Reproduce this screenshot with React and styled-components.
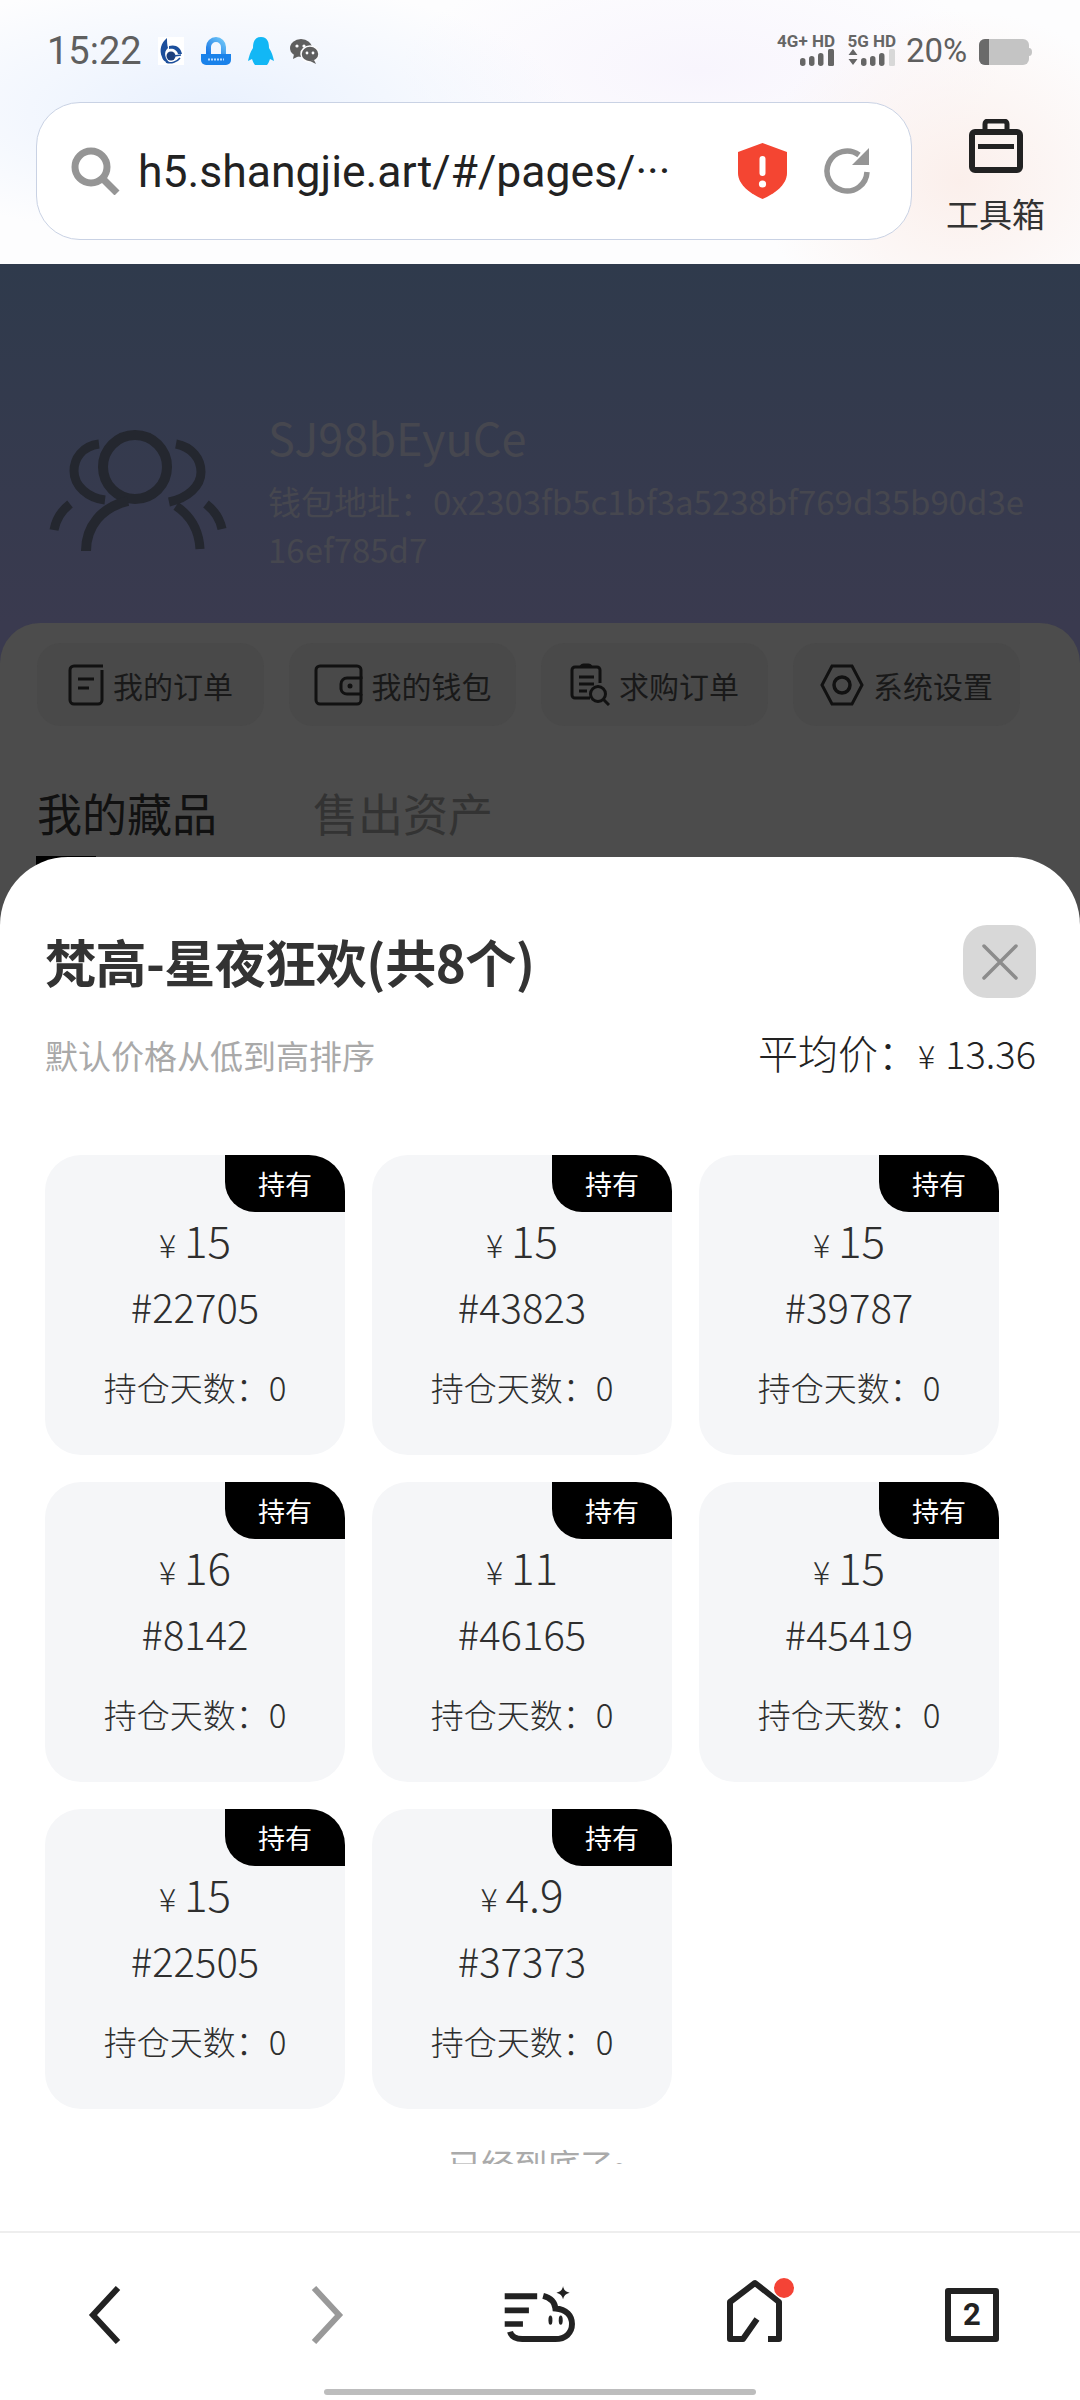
import React from 'react';
import styled, { createGlobalStyle } from 'styled-components';

const GlobalStyle = createGlobalStyle`
  html, body {
    margin: 0;
    padding: 0;
    background: #fff;
  }
  * {
    box-sizing: border-box;
  }
`;

const cjk = `"Noto Sans CJK SC", "Noto Sans", sans-serif`;

const Screen = styled.div`
  position: relative;
  width: 1080px;
  height: 2400px;
  overflow: hidden;
  display: flex;
  flex-direction: column;
  font-family: ${cjk};
`;

const Chrome = styled.header`
  height: 264px;
  flex: none;
  background:
    radial-gradient(ellipse 360px 130px at 210px 110px, #e9f1fe 0%, rgba(233, 241, 254, 0) 100%),
    radial-gradient(ellipse 200px 170px at 960px 180px, #fbefeb 0%, rgba(251, 239, 235, 0) 100%),
    radial-gradient(ellipse 300px 120px at 700px 70px, #f8f5fd 0%, rgba(248, 245, 253, 0) 100%),
    #fdfdfe;
`;

const StatusBar = styled.div`
  height: 102px;
  padding: 31px 48px 0 47px;
  display: flex;
  align-items: flex-start;
  color: #5f5f5f;
`;

const Time = styled.span`
  font-family: Roboto, sans-serif;
  font-size: 38px;
  line-height: 40px;
  width: 111px;
`;

const AppIcons = styled.div`
  display: flex;
  gap: 16px;
  align-items: center;
  height: 40px;
`;

const StatusRight = styled.div`
  margin-left: auto;
  display: flex;
  align-items: flex-start;
`;

const SignalBlock = styled.div`
  display: flex;
  flex-direction: column;
  align-items: flex-end;
  width: ${(p) => p.$w}px;
  margin-right: ${(p) => p.$mr}px;
`;

const SignalLabel = styled.span`
  font-family: Roboto, sans-serif;
  font-size: 17px;
  line-height: 16px;
  font-weight: 700;
  white-space: nowrap;
  color: #666;
  margin-top: 2px;
`;

const Percent = styled.span`
  font-family: Roboto, sans-serif;
  font-size: 33px;
  line-height: 40px;
  width: 73px;
`;

const BatterySvg = styled.svg`
  margin-top: 8px;
`;

const AddressRow = styled.div`
  padding-left: 36px;
  display: flex;
`;

const UrlBox = styled.div`
  width: 876px;
  height: 138px;
  border: 1.5px solid #c9d2e4;
  border-radius: 44px;
  background: #fff;
  padding-left: 34px;
  display: flex;
  align-items: center;
`;

const UrlText = styled.span`
  font-family: Roboto, sans-serif;
  font-size: 44.5px;
  color: #222;
  margin: 2px 0 0 18px;
  width: 600px;
  white-space: nowrap;
`;

const ReloadSvg = styled.svg`
  margin-left: 36px;
`;

const ToolBox = styled.div`
  margin-left: 34px;
  width: 99px;
  display: flex;
  flex-direction: column;
  align-items: center;
  padding-top: 17px;
  gap: 18px;
`;

const ToolLabel = styled.span`
  font-size: 33px;
  line-height: 44px;
  color: #333;
`;

const Backdrop = styled.section`
  flex: 1;
  min-height: 0;
  background: linear-gradient(180deg, #2f3a4c 0, #3a3a4f 359px, #3a3a4f 100%);
  display: flex;
  flex-direction: column;
`;

const Profile = styled.div`
  height: 359px;
  flex: none;
  padding: 144px 0 0 30px;
  display: flex;
  gap: 18px;
`;

const AvatarSvg = styled.svg`
  flex: none;
  margin-top: 3px;
`;

const ProfileText = styled.div`
  width: 760px;
  color: #46474f;
`;

const UserName = styled.div`
  font-size: 45px;
  line-height: 58px;
  margin-bottom: 11px;
`;

const WalletAddr = styled.div`
  font-size: 33px;
  line-height: 48px;
  word-break: break-all;
`;

const Sheet = styled.div`
  flex: 1;
  background: #4c4c4c;
  border-radius: 40px 40px 0 0;
  padding: 20px 37px 0;
`;

const MenuRow = styled.div`
  display: flex;
  gap: 25px;
`;

const MenuBtn = styled.div`
  width: 227px;
  height: 83px;
  background: #494949;
  border-radius: 24px;
  display: flex;
  align-items: center;
  justify-content: center;
  gap: 9px;
  font-size: 30px;
  color: #191919;
`;

const Tabs = styled.div`
  display: flex;
  gap: 96px;
  margin-top: 57px;
`;

const Tab = styled.span`
  font-size: 45px;
  line-height: 60px;
  color: ${(p) => (p.$active ? '#111' : '#333')};
`;

const TabLine = styled.div`
  margin: 13px 0 0 -1px;
  width: 60px;
  height: 12px;
  background: #000;
`;

const Modal = styled.div`
  position: absolute;
  left: 0;
  right: 0;
  top: 857px;
  bottom: 0;
  background: #fff;
  border-radius: 68px 68px 0 0;
  display: flex;
  flex-direction: column;
`;

const ModalHead = styled.div`
  padding: 68px 44px 0 45px;
  flex: none;
`;

const TitleRow = styled.div`
  display: flex;
  align-items: center;
  justify-content: space-between;
  height: 73px;
`;

const Title = styled.h2`
  margin: 0;
  font-size: 51px;
  line-height: 73px;
  font-weight: 700;
  letter-spacing: -0.5px;
  color: #333;
`;

const CloseBtn = styled.div`
  width: 73px;
  height: 73px;
  border-radius: 24px;
  background: #d8d8d8;
  display: flex;
  align-items: center;
  justify-content: center;
`;

const SubRow = styled.div`
  display: flex;
  align-items: center;
  justify-content: space-between;
  height: 50px;
  margin-top: 32px;
`;

const SortHint = styled.span`
  font-size: 33px;
  color: #a9a9a9;
`;

const Average = styled.span`
  font-size: 40px;
  font-weight: 300;
  line-height: 50px;
  margin-top: -4px;
  color: #222;
  display: flex;
  align-items: baseline;
`;

const AverageYen = styled.span`
  font-size: 32px;
`;

const AverageNum = styled.span`
  font-size: 38px;
  margin-left: 10px;
`;

const ListArea = styled.div`
  height: 1084px;
  padding: 75px 0 0 45px;
  overflow: hidden;
  flex: none;
`;

const Grid = styled.div`
  display: grid;
  grid-template-columns: repeat(3, 300px);
  gap: 27px;
`;

const Card = styled.div`
  position: relative;
  height: 300px;
  padding-top: 56px;
  border-radius: 36px;
  background: #f5f6f8;
  display: flex;
  flex-direction: column;
  align-items: center;
  font-weight: 300;
  color: #2e2e2e;
`;

const Badge = styled.span`
  position: absolute;
  top: 0;
  right: 0;
  width: 120px;
  height: 57px;
  background: #000;
  color: #fff;
  border-radius: 0 36px 0 30px;
  font-size: 27px;
  font-weight: 400;
  line-height: 57px;
  text-align: center;
`;

const Price = styled.div`
  line-height: 56px;
  font-size: 44px;
  display: flex;
  align-items: baseline;
  gap: 8px;
`;

const Yen = styled.span`
  font-size: 32px;
`;

const Serial = styled.div`
  font-size: 40px;
  line-height: 48px;
  margin-top: 10px;
`;

const Days = styled.div`
  font-size: 33px;
  line-height: 44px;
  margin-top: 35px;
`;

const EndHint = styled.div`
  margin: 35px 0 0 -45px;
  text-align: center;
  font-size: 33px;
  line-height: 40px;
  color: #aaa;
`;

const BottomBar = styled.nav`
  margin-top: auto;
  height: 169px;
  flex: none;
  border-top: 2px solid #eeeeee;
  display: flex;
  flex-direction: column;
  align-items: center;
`;

const NavRow = styled.div`
  width: 100%;
  height: 156px;
  padding-top: 8px;
  display: grid;
  grid-template-columns: repeat(5, 216px);
  align-items: center;
  justify-items: center;
`;

const ChevronSvg = styled.svg`
  margin-left: ${(p) => p.$shift}px;
`;

const HomeSvg = styled.svg`
  margin: -8px 0 0 7px;
`;

const TabCount = styled.div`
  width: 54px;
  height: 54px;
  border: 6px solid #222;
  border-radius: 3px;
  font-family: Roboto, sans-serif;
  font-size: 31px;
  font-weight: 700;
  line-height: 42px;
  text-align: center;
  color: #222;
`;

const HomeBar = styled.div`
  width: 432px;
  height: 6px;
  border-radius: 3px;
  background: #bdbdbd;
`;

const BlueLogo = () => (
  <svg width="26" height="28" viewBox="0 0 26 28">
    <rect width="26" height="28" fill="#fff" />
    <path d="M9 1 C3 6 1 13 4 20 C5 24 9 26 12 26 C7 22 5 15 10 11 C9 8 9 4 9 1Z" fill="#1c4f9c" />
    <path d="M11 9 C17 7 23 10 24 17 L20 17 C19 13 15 11 11 12Z" fill="#1c4f9c" />
    <circle cx="13" cy="19" r="4.5" fill="#1c3f7c" />
    <path d="M16 19 L23 18 M8 25 C13 27 19 25 22 21" stroke="#1c4f9c" strokeWidth="1.5" fill="none" />
  </svg>
);

const LockApp = () => (
  <svg width="32" height="29" viewBox="0 0 32 29">
    <defs>
      <linearGradient id="lockArc" x1="0" x2="1" y1="1" y2="0">
        <stop offset="0" stopColor="#1a78e6" />
        <stop offset="1" stopColor="#6cc4f7" />
      </linearGradient>
    </defs>
    <path d="M8.5 17 V10 A7.5 7.5 0 0 1 23.5 10 V17" fill="none" stroke="url(#lockArc)" strokeWidth="5" />
    <path d="M1 17 H31 V23 A5 5 0 0 1 26 28 H6 A5 5 0 0 1 1 23Z" fill="#1a82ea" />
    <path d="M8 22.5 H24" stroke="#b9dcff" strokeWidth="2" strokeDasharray="2 1" />
  </svg>
);

const Penguin = () => (
  <svg width="26" height="29" viewBox="0 0 26 29">
    <path d="M13 0 C6 0 5 6 5 11 C2 15 1 20 0 24 L4 22 C5 25 6 27 7 28 L19 28 C20 27 21 25 22 22 L26 24 C25 20 24 15 21 11 C21 6 20 0 13 0Z" fill="#12b7f5" />
  </svg>
);

const Wechat = () => (
  <svg width="29" height="25" viewBox="0 0 29 25">
    <ellipse cx="11" cy="9" rx="11" ry="9" fill="#5f5f5f" />
    <path d="M4 15 L3 20 L9 17Z" fill="#5f5f5f" />
    <ellipse cx="20" cy="15" rx="9" ry="8" fill="#5f5f5f" stroke="#fdfdfe" strokeWidth="1.5" />
    <path d="M24 21 L26 25 L20 22Z" fill="#5f5f5f" />
    <circle cx="7" cy="7" r="1.6" fill="#fdfdfe" />
    <circle cx="14" cy="7" r="1.6" fill="#fdfdfe" />
    <circle cx="17" cy="14" r="1.4" fill="#fdfdfe" />
    <circle cx="23" cy="14" r="1.4" fill="#fdfdfe" />
  </svg>
);

const Bars = ({ arrows, faded }) => (
  <svg width={arrows ? 48 : 36} height="17" viewBox={arrows ? '0 0 48 17' : '12 0 36 17'}>
    {arrows && <path d="M5 0 L9.5 6 H0.5Z M5 16 L9.5 10 H0.5Z" fill="#666" />}
    <rect x="13" y="9" width="5.5" height="8" rx="2.7" fill="#666" />
    <rect x="22" y="7" width="5.5" height="10" rx="2.7" fill="#666" />
    <rect x="31" y="4" width="5.5" height="13" rx="2.7" fill="#666" />
    <rect x="41" y="0" width="6" height="17" rx="1.5" fill={faded ? '#d8d8d8' : '#666'} />
  </svg>
);

const Battery = () => (
  <BatterySvg width="53" height="26" viewBox="0 0 53 26">
    <rect width="50" height="26" rx="6" fill="#c4c4c4" />
    <path d="M6 0 H10 V26 H6 A6 6 0 0 1 0 20 V6 A6 6 0 0 1 6 0Z" fill="#6a6a6a" />
    <path d="M50 9 A3 4 0 0 1 50 17Z" fill="#c4c4c4" />
  </BatterySvg>
);

const SearchIcon = () => (
  <svg width="49" height="48" viewBox="0 0 49 48">
    <circle cx="20" cy="20" r="16" fill="none" stroke="#959595" strokeWidth="7" />
    <path d="M31 31 L46 46" stroke="#959595" strokeWidth="7" />
  </svg>
);

const ShieldIcon = () => (
  <svg width="49" height="56" viewBox="0 0 49 56">
    <path d="M24.5 0 L49 9 V30 C49 42 36 51 24.5 56 C13 51 0 42 0 30 V9Z" fill="#f44532" />
    <rect x="21.5" y="13" width="6" height="20" rx="3" fill="#fff" />
    <circle cx="24.5" cy="41" r="3.6" fill="#fff" />
  </svg>
);

const ReloadIcon = () => (
  <ReloadSvg width="48" height="48" viewBox="0 0 48 48">
    <path d="M44 25 A20 20 0 1 1 36 8" fill="none" stroke="#959595" strokeWidth="5.5" />
    <path d="M46 1 V18 H29Z" fill="#959595" />
  </ReloadSvg>
);

const ToolboxIcon = () => (
  <svg width="54" height="54" viewBox="0 0 54 54">
    <path d="M16 13 V5 A3 3 0 0 1 19 2 H35 A3 3 0 0 1 38 5 V13" fill="none" stroke="#222" strokeWidth="5" />
    <rect x="3" y="13" width="48" height="38" rx="3" fill="none" stroke="#222" strokeWidth="6" />
    <rect x="9" y="25" width="36" height="5" fill="#222" />
  </svg>
);

const Avatar = () => (
  <AvatarSvg width="220" height="160" viewBox="0 0 220 160">
    <g fill="none" stroke="#24272f">
      <circle cx="105" cy="56" r="32" strokeWidth="10" />
      <path d="M56 140 C56 115 72 96 98 90" strokeWidth="10" />
      <path d="M170 138 C169 120 161 105 146 95" strokeWidth="9" />
      <path d="M69 33 C52 35 44 48 44 60 C44 75 58 87 75 89" strokeWidth="9" />
      <path d="M146 33 C162 36 171 48 171 61 C171 75 158 87 139 91" strokeWidth="9" />
      <path d="M40 93 C31 100 26 108 24 119" strokeWidth="9" />
      <path d="M176 93 C185 100 190 108 192 118" strokeWidth="9" />
    </g>
  </AvatarSvg>
);

const OrderIcon = () => (
  <svg width="36" height="42" viewBox="0 0 36 42" fill="none" stroke="#111" strokeWidth="3">
    <path d="M35 2 H6 A4 4 0 0 0 2 6 V36 A4 4 0 0 0 6 40 H30 A4 4 0 0 0 34 36 V6" />
    <path d="M10 15 H26 M10 24 H21" />
  </svg>
);

const WalletIcon = () => (
  <svg width="49" height="42" viewBox="0 0 49 42" fill="none" stroke="#111" strokeWidth="3">
    <path d="M47 15 V6 A4 4 0 0 0 43 2 H6 A4 4 0 0 0 2 6 V36 A4 4 0 0 0 6 40 H43 A4 4 0 0 0 47 36 V30" />
    <path d="M47 14 H33 A6 6 0 0 0 27 20 V25 A6 6 0 0 0 33 30 H47Z" />
    <circle cx="36" cy="22" r="2.5" fill="#111" stroke="none" />
  </svg>
);

const ClipboardIcon = () => (
  <svg width="40" height="43" viewBox="0 0 40 43" fill="none" stroke="#111" strokeWidth="3">
    <path d="M20 35 H5 A3 3 0 0 1 2 32 V7 A3 3 0 0 1 5 4 H27 A3 3 0 0 1 30 7 V20" />
    <path d="M11 4 A3 3 0 0 1 14 2 H18 A3 3 0 0 1 21 4" />
    <path d="M9 14 H24 M9 21 H24 M9 28 H17" />
    <circle cx="28" cy="31" r="7.5" />
    <path d="M33 36 L39 42" />
  </svg>
);

const HexIcon = () => (
  <svg width="44" height="42" viewBox="0 0 44 42" fill="none" stroke="#111" strokeWidth="3">
    <path d="M12 2 H32 L42 21 L32 40 H12 L2 21Z" />
    <circle cx="22" cy="21" r="8" strokeWidth="3.5" />
  </svg>
);

const CloseIcon = () => (
  <svg width="36" height="36" viewBox="0 0 36 36">
    <path d="M2 2 L34 34 M34 2 L2 34" stroke="#8c8c8c" strokeWidth="3.5" strokeLinecap="round" />
  </svg>
);

const Chevron = ({ color, dir }) => (
  <ChevronSvg $shift={dir === 'left' ? -6 : 6} width="36" height="58" viewBox="0 0 36 58">
    <path
      d={dir === 'left' ? 'M31 2 L6 29 L31 56' : 'M5 2 L30 29 L5 56'}
      fill="none"
      stroke={color}
      strokeWidth="6"
    />
  </ChevronSvg>
);

const HubIcon = () => (
  <svg width="73" height="58" viewBox="190 80 220 175">
    <path d="M192 102 H290 V120 H192Z M192 145 H265 V162 H192Z M192 186 H247 V203 H192Z" fill="#222" />
    <path
      d="M308 110 C330 116 343 128 345 148 C378 150 395 170 395 195 C395 222 375 240 345 240 H245 C225 240 212 232 208 218"
      fill="none"
      stroke="#222"
      strokeWidth="18"
    />
    <ellipse cx="330" cy="183" rx="6" ry="14" fill="#222" />
    <ellipse cx="361" cy="183" rx="6" ry="14" fill="#222" />
    <path d="M368 80 C370 92 376 98 388 100 C376 103 370 109 368 120 C366 109 360 103 348 100 C360 98 366 92 368 80Z" fill="#222" />
  </svg>
);

const HomeIcon = () => (
  <HomeSvg width="72" height="68" viewBox="0 0 72 68">
    <path
      d="M33 42 L19 62 H6 V25 L31 6 L55 25 V62 H44"
      fill="none"
      stroke="#222"
      strokeWidth="6"
      strokeLinejoin="round"
    />
    <circle cx="60" cy="11" r="10" fill="#f44336" />
  </HomeSvg>
);

const menus = [
  { label: '我的订单', icon: <OrderIcon /> },
  { label: '我的钱包', icon: <WalletIcon /> },
  { label: '求购订单', icon: <ClipboardIcon /> },
  { label: '系统设置', icon: <HexIcon /> },
];

const items = [
  { price: '15', no: '22705' },
  { price: '15', no: '43823' },
  { price: '15', no: '39787' },
  { price: '16', no: '8142' },
  { price: '11', no: '46165' },
  { price: '15', no: '45419' },
  { price: '15', no: '22505' },
  { price: '4.9', no: '37373' },
];

const App = () => (
  <Screen>
    <GlobalStyle />
    <Chrome>
      <StatusBar>
        <Time>15:22</Time>
        <AppIcons>
          <BlueLogo />
          <LockApp />
          <Penguin />
          <Wechat />
        </AppIcons>
        <StatusRight>
          <SignalBlock $w={58} $mr={11}>
            <SignalLabel>4G+ HD</SignalLabel>
            <Bars />
          </SignalBlock>
          <SignalBlock $w={50} $mr={10}>
            <SignalLabel>5G HD</SignalLabel>
            <Bars arrows faded />
          </SignalBlock>
          <Percent>20%</Percent>
          <Battery />
        </StatusRight>
      </StatusBar>
      <AddressRow>
        <UrlBox>
          <SearchIcon />
          <UrlText>h5.shangjie.art/#/pages/···</UrlText>
          <ShieldIcon />
          <ReloadIcon />
        </UrlBox>
        <ToolBox>
          <ToolboxIcon />
          <ToolLabel>工具箱</ToolLabel>
        </ToolBox>
      </AddressRow>
    </Chrome>

    <Backdrop>
      <Profile>
        <Avatar />
        <ProfileText>
          <UserName>SJ98bEyuCe</UserName>
          <WalletAddr>钱包地址：0x2303fb5c1bf3a5238bf769d35b90d3e16ef785d7</WalletAddr>
        </ProfileText>
      </Profile>
      <Sheet>
        <MenuRow>
          {menus.map((m) => (
            <MenuBtn key={m.label}>
              {m.icon}
              {m.label}
            </MenuBtn>
          ))}
        </MenuRow>
        <Tabs>
          <Tab $active>我的藏品</Tab>
          <Tab>售出资产</Tab>
        </Tabs>
        <TabLine />
      </Sheet>
    </Backdrop>

    <Modal>
      <ModalHead>
        <TitleRow>
          <Title>梵高-星夜狂欢(共8个)</Title>
          <CloseBtn>
            <CloseIcon />
          </CloseBtn>
        </TitleRow>
        <SubRow>
          <SortHint>默认价格从低到高排序</SortHint>
          <Average>
            平均价：<AverageYen>¥</AverageYen>
            <AverageNum>13.36</AverageNum>
          </Average>
        </SubRow>
      </ModalHead>
      <ListArea>
        <Grid>
          {items.map((item) => (
            <Card key={item.no}>
              <Badge>持有</Badge>
              <Price>
                <Yen>¥</Yen>
                {item.price}
              </Price>
              <Serial>#{item.no}</Serial>
              <Days>持仓天数：0</Days>
            </Card>
          ))}
        </Grid>
        <EndHint>已经到底了~</EndHint>
      </ListArea>
      <BottomBar>
        <NavRow>
          <Chevron dir="left" color="#222" />
          <Chevron dir="right" color="#999" />
          <HubIcon />
          <HomeIcon />
          <TabCount>2</TabCount>
        </NavRow>
        <HomeBar />
      </BottomBar>
    </Modal>
  </Screen>
);

export default App;
